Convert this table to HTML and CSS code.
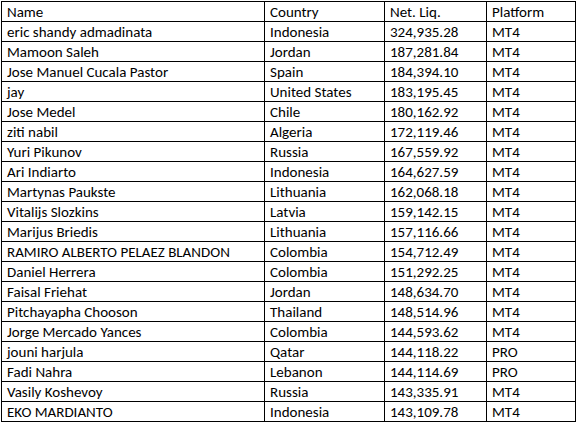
FILE: index.html
```html
<!DOCTYPE html>
<html>
<head>
<meta charset="utf-8">
<link rel="stylesheet" href="styles.css">
</head>
<body>
<div class="wrap">
<table class="grid">
<colgroup><col class="c1"><col class="c2"><col class="c3"><col class="c4"></colgroup>
<tr><td>Name</td><td>Country</td><td>Net. Liq.</td><td>Platform</td></tr>
<tr><td>eric shandy admadinata</td><td>Indonesia</td><td>324,935.28</td><td>MT4</td></tr>
<tr><td>Mamoon Saleh</td><td>Jordan</td><td>187,281.84</td><td>MT4</td></tr>
<tr><td>Jose Manuel Cucala Pastor</td><td>Spain</td><td>184,394.10</td><td>MT4</td></tr>
<tr><td>jay</td><td>United States</td><td>183,195.45</td><td>MT4</td></tr>
<tr><td>Jose Medel</td><td>Chile</td><td>180,162.92</td><td>MT4</td></tr>
<tr><td>ziti nabil</td><td>Algeria</td><td>172,119.46</td><td>MT4</td></tr>
<tr><td>Yuri Pikunov</td><td>Russia</td><td>167,559.92</td><td>MT4</td></tr>
<tr><td>Ari Indiarto</td><td>Indonesia</td><td>164,627.59</td><td>MT4</td></tr>
<tr><td>Martynas Paukste</td><td>Lithuania</td><td>162,068.18</td><td>MT4</td></tr>
<tr><td>Vitalijs Slozkins</td><td>Latvia</td><td>159,142.15</td><td>MT4</td></tr>
<tr><td>Marijus Briedis</td><td>Lithuania</td><td>157,116.66</td><td>MT4</td></tr>
<tr><td>RAMIRO ALBERTO PELAEZ BLANDON</td><td>Colombia</td><td>154,712.49</td><td>MT4</td></tr>
<tr><td>Daniel Herrera</td><td>Colombia</td><td>151,292.25</td><td>MT4</td></tr>
<tr><td>Faisal Friehat</td><td>Jordan</td><td>148,634.70</td><td>MT4</td></tr>
<tr><td>Pitchayapha Chooson</td><td>Thailand</td><td>148,514.96</td><td>MT4</td></tr>
<tr><td>Jorge Mercado Yances</td><td>Colombia</td><td>144,593.62</td><td>MT4</td></tr>
<tr><td>jouni harjula</td><td>Qatar</td><td>144,118.22</td><td>PRO</td></tr>
<tr><td>Fadi Nahra</td><td>Lebanon</td><td>144,114.69</td><td>PRO</td></tr>
<tr><td>Vasily Koshevoy</td><td>Russia</td><td>143,335.91</td><td>MT4</td></tr>
<tr><td>EKO MARDIANTO</td><td>Indonesia</td><td>143,109.78</td><td>MT4</td></tr>
</table>
</div>
</body>
</html>
```
FILE: styles.css
```css
html, body { margin: 0; padding: 0; background: #fff; }
.wrap { padding: 1px 0 0 1px; }
.grid {
  border-collapse: collapse;
  table-layout: fixed;
  width: 575px;
  font-family: Carlito, Lato, "Open Sans", sans-serif;
  font-size: 15px;
  color: #000;
}
.c1 { width: 263px; }
.c2 { width: 120px; }
.c3 { width: 102px; }
.c4 { width: 89px; }
.grid td {
  border: 1px solid #000;
  height: 18px;
  padding: 1px 0 0 5px;
  line-height: 18px;
  white-space: nowrap;
  overflow: hidden;
  vertical-align: middle;
}
```
